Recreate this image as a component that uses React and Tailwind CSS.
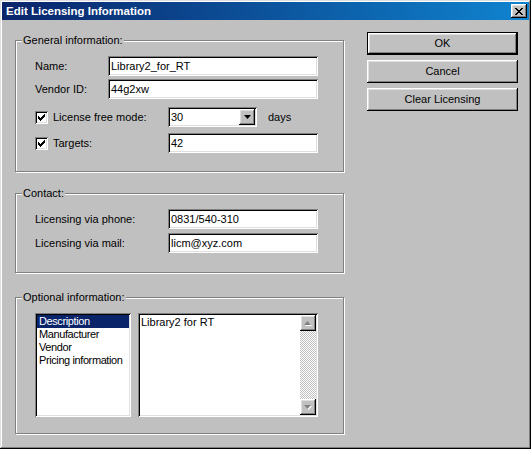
import React from "react";

const raised =
  "shadow-[inset_-1px_-1px_0_#000,inset_1px_1px_0_#fff,inset_-2px_-2px_0_#808080,inset_2px_2px_0_#dfdfdf]";
const sunken =
  "shadow-[inset_1px_1px_0_#808080,inset_-1px_-1px_0_#fff,inset_2px_2px_0_#000,inset_-2px_-2px_0_#dfdfdf]";

function Group({ title, className, children }) {
  return (
    <div
      className={
        "relative border border-[#808080] shadow-[1px_1px_0_#fff,inset_1px_1px_0_#fff] " +
        className
      }
    >
      <span className="absolute left-[6px] -top-[7px] px-[1px] bg-[#c0c0c0] leading-[13px]">
        {title}
      </span>
      {children}
    </div>
  );
}

function TextBox({ value, className }) {
  return (
    <div
      className={
        "h-[20px] bg-white flex items-center pl-[3px] leading-[13px] " +
        sunken +
        " " +
        className
      }
    >
      {value}
    </div>
  );
}

function CheckBox() {
  return (
    <div className={"w-[13px] h-[13px] bg-white flex items-center justify-center " + sunken}>
      <svg width="7" height="7" viewBox="0 0 7 7">
        <path d="M0 2h1v1h1v1h1v-1h1v-1h1v-1h1v-1h1v3h-1v1h-1v1h-1v1h-1v1h-1v-1h-1v-1h-1z" fill="#000" />
      </svg>
    </div>
  );
}

function Button({ label, isDefault }) {
  if (isDefault) {
    return (
      <div className="w-[151px] h-[23px] border border-black">
        <div className={"w-full h-full flex items-center justify-center " + raised}>{label}</div>
      </div>
    );
  }
  return (
    <div className={"w-[151px] h-[23px] flex items-center justify-center " + raised}>{label}</div>
  );
}

function ArrowButton({ down }) {
  return (
    <div className={"w-[16px] h-[16px] bg-[#c0c0c0] flex items-center justify-center " + raised}>
      <svg width="8" height="5" viewBox="0 0 8 5">
        {down ? (
          <>
            <path d="M1 1h7l-3.5 4z" fill="#fff" />
            <path d="M0 0h7l-3.5 4z" fill="#808080" />
          </>
        ) : (
          <>
            <path d="M1 5h7l-3.5-4z" fill="#fff" />
            <path d="M0 4h7l-3.5-4z" fill="#808080" />
          </>
        )}
      </svg>
    </div>
  );
}

export default function App() {
  return (
    <div className="w-[531px] h-[449px] bg-[#c0c0c0] p-[2px] text-[11px] text-black font-['Liberation_Sans',Arial,sans-serif] shadow-[inset_-1px_-1px_0_#000,inset_1px_1px_0_#dfdfdf,inset_-2px_-2px_0_#808080,inset_2px_2px_0_#fff]">
      {/* title bar */}
      <div className="h-[18px] flex items-center justify-between pl-[4px] pr-[2px] bg-linear-to-r from-[#0a246a] to-[#1084d0]">
        <span className="text-white font-bold text-[11.5px] leading-[13px]">Edit Licensing Information</span>
        <div className={"w-[16px] h-[14px] bg-[#c0c0c0] flex items-center justify-center " + raised}>
          <svg width="8" height="7" viewBox="0 0 8 7">
            <path
              d="M0 0h2v1h1v1h2v-1h1v-1h2v1h-1v1h-1v1h-1v1h1v1h1v1h1v1h-2v-1h-1v-1h-2v1h-1v1h-2v-1h1v-1h1v-1h1v-1h-1v-1h-1v-1h-1z"
              fill="#000"
            />
          </svg>
        </div>
      </div>

      <div className="flex pl-[13px]">
        <div className="flex flex-col mt-[20px] w-[329px]">
          <Group title="General information:" className="h-[132px] pl-[19px] pt-[15px]">
            <div className="flex items-center h-[20px]">
              <span className="w-[73px]">Name:</span>
              <TextBox value="Library2_for_RT" className="w-[210px]" />
            </div>
            <div className="flex items-center h-[20px] mt-[3px]">
              <span className="w-[73px]">Vendor ID:</span>
              <TextBox value="44g2xw" className="w-[210px]" />
            </div>
            <div className="flex items-center h-[20px] mt-[8px]">
              <div className="w-[133px] flex items-center gap-[5px]">
                <CheckBox />
                <span>License free mode:</span>
              </div>
              <div className={"w-[89px] h-[20px] bg-white flex items-center justify-between pl-[3px] pr-[2px] " + sunken}>
                <span>30</span>
                <div className={"w-[16px] h-[16px] bg-[#c0c0c0] flex items-center justify-center " + raised}>
                  <svg width="7" height="4" viewBox="0 0 7 4">
                    <path d="M0 0h7l-3.5 4z" fill="#000" />
                  </svg>
                </div>
              </div>
              <span className="ml-[11px]">days</span>
            </div>
            <div className="flex items-center h-[20px] mt-[6px]">
              <div className="w-[133px] flex items-center gap-[5px]">
                <CheckBox />
                <span>Targets:</span>
              </div>
              <TextBox value="42" className="w-[150px]" />
            </div>
          </Group>

          <Group title="Contact:" className="h-[80px] mt-[21px] pl-[19px] pt-[15px]">
            <div className="flex items-center h-[20px]">
              <span className="w-[133px]">Licensing via phone:</span>
              <TextBox value="0831/540-310" className="w-[150px]" />
            </div>
            <div className="flex items-center h-[20px] mt-[4px]">
              <span className="w-[133px]">Licensing via mail:</span>
              <TextBox value="licm@xyz.com" className="w-[150px]" />
            </div>
          </Group>

          <Group title="Optional information:" className="h-[137px] mt-[24px] pl-[19px] pt-[15px]">
            <div className="flex">
              <div className={"w-[96px] h-[104px] bg-white p-[2px] leading-[13px] tracking-[-0.4px] overflow-hidden " + sunken}>
                <div className="bg-[#0a246a] text-white pl-[2px]">Description</div>
                <div className="pl-[2px]">Manufacturer</div>
                <div className="pl-[2px]">Vendor</div>
                <div className="pl-[2px] whitespace-nowrap">Pricing information</div>
              </div>
              <div className={"ml-[7px] w-[180px] h-[104px] bg-white p-[2px] flex " + sunken}>
                <div className="flex-1 pl-[1px] pt-[1px] leading-[13px]">Library2 for RT</div>
                <div className="w-[16px] flex flex-col">
                  <ArrowButton />
                  <div className="flex-1 bg-[repeating-conic-gradient(#c0c0c0_0_25%,#fff_0_50%)] bg-size-[2px_2px]" />
                  <ArrowButton down />
                </div>
              </div>
            </div>
          </Group>
        </div>

        <div className="ml-[23px] mt-[12px] flex flex-col gap-[5px]">
          <Button label="OK" isDefault />
          <Button label="Cancel" />
          <Button label="Clear Licensing" />
        </div>
      </div>
    </div>
  );
}
